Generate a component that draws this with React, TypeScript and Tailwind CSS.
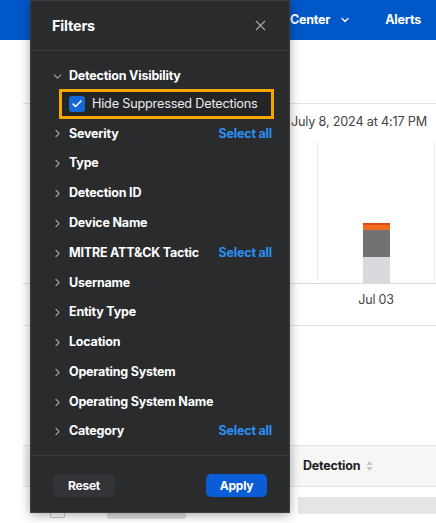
import { ChevronDown, ChevronRight, X, Check } from "lucide-react";

// Filter groups shown in the side panel; some of them offer "Select all"
const groups = [
  { label: "Severity", selectAll: true },
  { label: "Type" },
  { label: "Detection ID" },
  { label: "Device Name" },
  { label: "MITRE ATT&CK Tactic", selectAll: true },
  { label: "Username" },
  { label: "Entity Type" },
  { label: "Location" },
  { label: "Operating System" },
  { label: "Operating System Name" },
  { label: "Category", selectAll: true },
];

function Background() {
  return (
    <div className="flex flex-col w-full h-full">
      {/* top nav */}
      <div className="h-10 bg-[#0057c8] flex items-center justify-end pr-[15px] gap-[34px] shrink-0">
        <div className="flex items-center gap-[9px] text-white font-bold text-[12.5px] tracking-[-0.2px]">
          Center
          <ChevronDown size={12} strokeWidth={2.5} />
        </div>
        <div className="text-white font-bold text-[12.5px] tracking-[-0.2px]">Alerts</div>
      </div>
      <div className="h-[63px] shrink-0" />
      <div className="ml-[23px] border-t border-[#e2e2e4]">
        <div className="flex justify-end pr-[9px] pt-[9px] h-[37px] text-[12.7px] tracking-[-0.2px] text-[#444] leading-[18px]">
          July 8, 2024 at 4:17 PM
        </div>
        <div className="flex justify-end h-[143px] border-b border-[#dcdcde]">
          <div className="w-[118px] border-l border-[#ececee]" />
          <div className="w-[118px] border-l border-r border-[#ececee] mr-[1px] flex flex-col justify-end items-center">
            <div className="w-[27px] flex flex-col">
              <div className="h-[2px] bg-[#d94a10]" />
              <div className="h-[5px] bg-[#f26a1b]" />
              <div className="h-[27px] bg-[#707274]" />
              <div className="h-[26px] bg-[#d9dadd]" />
            </div>
          </div>
        </div>
        <div className="flex justify-end h-[42px] border-b border-[#e2e2e4]">
          <div className="w-[118px] mr-[1px] text-center pt-[7px] text-[12.5px] tracking-[-0.2px] text-[#444]">Jul 03</div>
        </div>
        <div className="h-[119px]" />
        <div className="h-[42px] bg-[#f6f6f7] border-t border-b border-[#e2e2e4] flex items-center pl-[280px] gap-[6px]">
          <span className="font-bold text-[12.5px] tracking-[-0.2px] text-[#222]">Detection</span>
          <svg width="7" height="12" viewBox="0 0 7 12">
            <path d="M3.5 1 L6.5 5 H0.5 Z" fill="#c4c4c6" />
            <path d="M3.5 11 L6.5 7 H0.5 Z" fill="#c4c4c6" />
          </svg>
        </div>
        <div className="flex items-start mt-[10px]">
          <div className="w-[15px] h-[5px] ml-[27px] mt-[16px] border border-[#c9c9cb] border-t-0 rounded-b-[2px]" />
          <div className="w-[79px] h-[6px] ml-[42px] mt-[16px] bg-[#dedee0] rounded-b-[3px]" />
          <div className="h-[17px] ml-[112px] flex-1 bg-[#e5e5e6]" />
        </div>
      </div>
    </div>
  );
}

export default function App() {
  return (
    <div
      className="relative w-[436px] h-[523px] bg-white overflow-hidden"
      style={{ fontFamily: "Inter, 'Liberation Sans', sans-serif" }}
    >
      <Background />

      {/* Filters panel sits over the page */}
      <div className="absolute left-[30px] top-0 w-[260px] h-[513px] bg-[#2a2b2d] border border-[#3b3c3e] shadow-[0_2px_10px_rgba(0,0,0,0.35)] flex flex-col">
        <div className="h-[50px] shrink-0 flex items-center justify-between pl-[21px] pr-[20px] border-b border-[#3a3b3d]">
          <span className="text-white font-bold text-[14.5px] tracking-[-0.2px]">Filters</span>
          <X size={17} strokeWidth={1.5} className="text-[#a9a9ab]" />
        </div>

        <div className="flex-1 pt-[12px] pl-[19px] pr-[17px]">
          <div className="h-[26px] flex items-center">
            <ChevronDown size={13} strokeWidth={2} className="text-[#a0a0a2] ml-[1px]" />
            <span className="ml-[5px] text-white font-bold text-[12.5px] tracking-[-0.2px]">Detection Visibility</span>
          </div>
          <div className="ml-[9px] mr-[-2px] h-[30px] border-[3px] border-[#f5a700] bg-[#242527] flex items-center pl-[7px]">
            <div className="w-[16px] h-[16px] rounded-[3px] bg-[#1667d6] flex items-center justify-center">
              <Check size={12} strokeWidth={3} className="text-white" />
            </div>
            <span className="ml-[7px] text-[12.7px] tracking-[-0.2px] text-[#ececee]">Hide Suppressed Detections</span>
          </div>
          {groups.map((g) => (
            <div key={g.label} className="h-[29.8px] flex items-center">
              <ChevronRight size={13} strokeWidth={2} className="text-[#a0a0a2] ml-[1px]" />
              <span className="ml-[5px] text-white font-bold text-[12.5px] tracking-[-0.2px]">{g.label}</span>
              {g.selectAll && (
                <span className="ml-auto text-[#2b8ff5] font-bold text-[12.5px] tracking-[-0.2px]">Select all</span>
              )}
            </div>
          ))}
        </div>

        <div className="h-[57px] shrink-0 border-t border-[#3a3b3d] flex items-start justify-between pt-[18px] px-[22px]">
          <button className="w-[62px] h-[23px] rounded-[5px] bg-[#333437] text-white font-bold text-[12px] tracking-[-0.2px]">
            Reset
          </button>
          <button className="w-[61px] h-[23px] rounded-[5px] bg-[#0a5dd6] text-white font-bold text-[12px] tracking-[-0.2px]">
            Apply
          </button>
        </div>
      </div>
    </div>
  );
}
